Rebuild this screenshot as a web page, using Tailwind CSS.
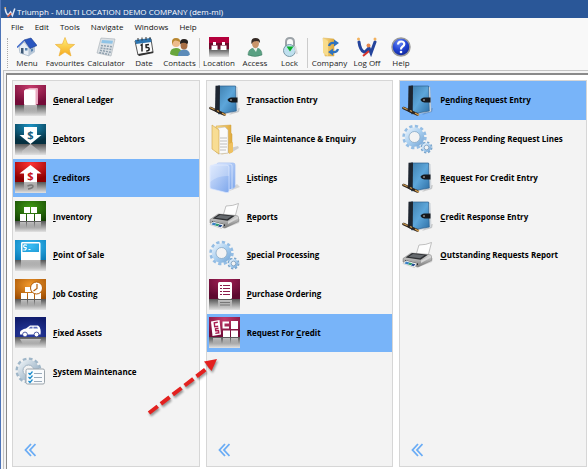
<!DOCTYPE html>
<html lang="en">
<head>
<meta charset="utf-8">
<meta name="viewport" content="width=device-width, initial-scale=1">
<title>Triumph - MULTI LOCATION DEMO COMPANY (dem-ml)</title>
<script src="https://cdn.jsdelivr.net/npm/@tailwindcss/browser@4"></script>
</head>
<body class="relative flex h-screen flex-col overflow-hidden border-l border-[#4d74b8] bg-[#f8f8f8] font-['Open_Sans','Noto_Sans',sans-serif] text-[#111]">

<!-- Icon library -->
<svg width="0" height="0" class="absolute" aria-hidden="true">
  <defs>
    <linearGradient id="floor" x2="0" y2="1"><stop stop-color="#555"/><stop offset="1" stop-color="#e2e2e2"/></linearGradient>
    <linearGradient id="fade" x2="0" y2="1"><stop stop-color="#fff" stop-opacity=".6"/><stop offset="1" stop-color="#fff" stop-opacity="0"/></linearGradient>
    <radialGradient id="g-pink" cx=".5" cy=".1" r=".8"><stop stop-color="#c43a6b"/><stop offset="1" stop-color="#740c38"/></radialGradient>
    <radialGradient id="g-teal" cx=".5" cy=".1" r=".8"><stop stop-color="#1c93c4"/><stop offset="1" stop-color="#053040"/></radialGradient>
    <radialGradient id="g-red" cx=".5" cy=".1" r=".8"><stop stop-color="#f33"/><stop offset="1" stop-color="#8e0000"/></radialGradient>
    <radialGradient id="g-green" cx=".5" cy=".3" r=".8"><stop stop-color="#3f9a14"/><stop offset="1" stop-color="#123f02"/></radialGradient>
    <radialGradient id="g-sky" cx=".5" cy=".3" r=".8"><stop stop-color="#38bdf5"/><stop offset="1" stop-color="#0a7cb8"/></radialGradient>
    <radialGradient id="g-orange" cx=".5" cy=".3" r=".8"><stop stop-color="#f39a2c"/><stop offset="1" stop-color="#9c4c02"/></radialGradient>
    <radialGradient id="g-navy" cx=".5" cy=".9" r=".9"><stop stop-color="#2b3fa5"/><stop offset="1" stop-color="#101c6c"/></radialGradient>
    <radialGradient id="g-plum" cx=".5" cy=".1" r=".8"><stop stop-color="#a21f55"/><stop offset="1" stop-color="#5e0a30"/></radialGradient>
    <linearGradient id="book" x2="1" y2="1"><stop stop-color="#3f7fae"/><stop offset=".5" stop-color="#5da6da"/><stop offset="1" stop-color="#2d6fa5"/></linearGradient>
    <linearGradient id="gear" x2="1" y2="1"><stop stop-color="#e3effa"/><stop offset=".5" stop-color="#a9cff0"/><stop offset="1" stop-color="#7cabd8"/></linearGradient>
    <linearGradient id="greygear" x2="1" y2="1"><stop stop-color="#e6edf2"/><stop offset="1" stop-color="#8fa9bf"/></linearGradient>
    <linearGradient id="folder" x2="1" y2="0"><stop stop-color="#f9dc8c"/><stop offset="1" stop-color="#dfa93c"/></linearGradient>
    <linearGradient id="sheet" x2="1" y2="1"><stop stop-color="#d5e3fd"/><stop offset="1" stop-color="#7fa8ec"/></linearGradient>
    <linearGradient id="metal" x2="0" y2="1"><stop stop-color="#e0e0e0"/><stop offset="1" stop-color="#7c7c7c"/></linearGradient>
    <radialGradient id="ball" cx=".4" cy=".25" r=".8"><stop stop-color="#6c8cf5"/><stop offset=".5" stop-color="#2346d6"/><stop offset="1" stop-color="#0b1f8f"/></radialGradient>
    <linearGradient id="star" x2="0" y2="1"><stop stop-color="#fff27a"/><stop offset="1" stop-color="#f6a81c"/></linearGradient>
  </defs>

  <symbol id="ledger" viewBox="0 0 31 31">
    <path fill="url(#g-pink)" d="M0 0h31v20H0z"/><path fill="url(#floor)" d="M0 20h31v11H0z"/>
    <path fill="#e9a9c0" d="M12 3h10q1 0 1 1v15l-3 1V6z"/><path fill="#f6d3df" d="M10 4h10q1 0 1 1v15h-3z"/>
    <rect x="9" y="5" width="11" height="15" rx="1" fill="#fff"/><path fill="url(#fade)" d="M9 20h11l2 0v8H9z"/>
  </symbol>
  <symbol id="inventory" viewBox="0 0 31 31">
    <path fill="url(#g-green)" d="M0 0h31v20H0z"/><path fill="url(#floor)" d="M0 20h31v11H0z"/>
    <path fill="#fff" d="M9 6h6v6H9zM16 6h6v6h-6zM5 13h6v7H5zM12 13h7v7h-7zM20 13h6v7h-6z"/>
    <path fill="url(#fade)" d="M5 21h6v6H5zM12 21h7v6h-7zM20 21h6v6h-6z"/>
  </symbol>
  <symbol id="pos" viewBox="0 0 31 31">
    <path fill="url(#g-sky)" d="M0 0h31v20H0z"/><path fill="url(#floor)" d="M0 20h31v11H0z"/>
    <path fill="#fff" fill-rule="evenodd" d="M7 2h17q1.500 0 1.500 1.500V20H6V3.500Q6 2 7 2zm.5 1.500V12H24V3.500z"/>
    <path fill="none" stroke="#fff" stroke-width="1.200" d="M12 5.200q-3.300-1-3.300.8t1.800 1.700-.2 2.300H8.200M13.500 9.500h2"/>
    <path fill="url(#fade)" d="M6 20h19.500v9H6z"/>
  </symbol>
  <symbol id="job" viewBox="0 0 31 31">
    <path fill="url(#g-orange)" d="M0 0h31v20H0z"/><path fill="url(#floor)" d="M0 20h31v11H0z"/>
    <path fill="#fff" d="M10 8h6v5h-6zM6 14h6v6H6zM13 14h6v6h-6zM20 14h6v6h-6z"/>
    <circle cx="21.500" cy="9" r="6" fill="#fff" stroke="#b35d08"/><path fill="none" stroke="#b35d08" stroke-width="1.200" d="M22 5v4.500L18.500 12"/>
    <path fill="url(#fade)" d="M6 21h6v6H6zM13 21h6v6h-6zM20 21h6v6h-6z"/>
  </symbol>
  <symbol id="assets" viewBox="0 0 31 31">
    <path fill="url(#g-navy)" d="M0 0h31v20H0z"/><path fill="url(#floor)" d="M0 20h31v11H0z"/>
    <path fill="#fff" d="M5 17.500V15q1-2.500 6-3.500l4-3h8q2 1 2.500 4 .5 3 0 5z"/><path fill="#5d6cbd" d="M13.500 11.500l2-1.800h2v1.800zM18.500 9.700h3.500l1 1.800h-4.500z"/>
    <circle cx="10" cy="17.500" r="2.400" fill="#fff" stroke="#26368f" stroke-width=".8"/><circle cx="21.500" cy="17.500" r="2.400" fill="#fff" stroke="#26368f" stroke-width=".8"/>
    <path fill="url(#fade)" d="M5 22h21l-2 5H8z"/>
  </symbol>
  <symbol id="maintenance" viewBox="0 0 31 31">
    <circle cx="13.500" cy="14.500" r="11.500" fill="none" stroke="#9fb6c8" stroke-width="3" stroke-dasharray="3.600 2.422"/>
    <circle cx="13.500" cy="14.500" r="8" fill="none" stroke="url(#greygear)" stroke-width="5.500"/>
    <circle cx="13.500" cy="14.500" r="5.500" fill="#f3f3f3" stroke="#9fb2c2"/>
    <rect x="11" y="13" width="18.500" height="15" rx="1.500" fill="#f9fbfd" stroke="#9aa3aa"/>
    <path fill="none" stroke="#1c8ccc" stroke-width="1.200" d="M13.500 17l1.500 1.500 2.500-3M13.500 21l1.500 1.500 2.500-3M13.500 25l1.500 1.500 2.500-3"/>
    <path stroke="#9ab" d="M19 17.500h8M19 21.500h8M19 25.500h8"/>
  </symbol>
  <symbol id="journal" viewBox="0 0 31 31">
    <path fill="#000" opacity=".15" d="M20 30l10-3 1-4-5 1z"/>
    <path fill="#e4e8ec" stroke="#9aa7b2" stroke-width=".4" d="M11 1.500l17 .5 1 24.500-17 3z"/>
    <path fill="url(#book)" stroke="#2b5f8c" stroke-width=".7" d="M9 1h17.500l.8 25L9.500 29z"/>
    <path fill="#1d2530" d="M6.500.8L11 .6l-.3 28.400-4.700-2.500z"/>
    <path fill="#15181d" d="M28.500 12.500h-6q-3.500.5-4 2.500 1 2 4 2.500h6z"/><circle cx="22" cy="15" r="1" fill="#888"/>
    <path stroke="#2e2620" stroke-width="2.600" stroke-linecap="round" d="M1.500 23l14 6.500"/><path stroke="#cf9c4e" stroke-width="1.300" d="M1 22.500l4.500 2M8 25.500l2 1M13 28.200l4 1.900"/>
  </symbol>
  <symbol id="files" viewBox="0 0 31 31">
    <path fill="#000" opacity=".15" d="M20 30l10-6-1-2-8 2z"/>
    <path fill="url(#folder)" stroke="#cfa040" stroke-width=".5" d="M7 2l15-1v8l1 1v18l-10 2-6-2z"/>
    <path fill="#fafafa" stroke="#bbb" stroke-width=".5" d="M9 4l7-1 3 3v23l-10 1z"/>
    <path stroke="#a5a5a5" stroke-width=".7" d="M11 14h7M11 17h7M11 20h7M11 23h7M11 26h6"/>
    <path fill="#f8dd93" stroke="#cfa24a" stroke-width=".6" d="M3 1l7 5v24l-7-5z"/>
    <path fill="#efc160" d="M20 20l4-2v10l-4 2z"/>
  </symbol>
  <symbol id="listings" viewBox="0 0 31 31">
    <path fill="#000" opacity=".12" d="M18 30l13-5-3-3z"/>
    <path fill="url(#sheet)" stroke="#9dbcf2" stroke-width=".7" d="M8 2q0-1 2-1h14q2 0 2 2v22l-3 2z"/>
    <path fill="url(#sheet)" stroke="#e3edff" stroke-width=".7" d="M5 3q0-1 2-1h14q2 0 2 2v23l-3 1z"/>
    <path fill="url(#sheet)" stroke="#dbe7ff" stroke-width=".7" d="M1 5q0-2 3-2h13q3 0 3 2v24q0 2-3 1.500L3 27q-2 0-2-2z"/>
    <path fill="#fff" opacity=".25" d="M1 5q0-2 3-2h13q3 0 3 2v9Q9 13 1 20z"/>
  </symbol>
  <symbol id="printer" viewBox="0 0 31 31">
    <path fill="#000" opacity=".14" d="M14 28l16-6 1-4-14 6z"/>
    <path fill="#fdfdfd" stroke="#a8a8a8" stroke-width=".7" d="M17 5q7 0 12.500-2.500L26 16l-12-1z"/>
    <path fill="url(#metal)" stroke="#777" stroke-width=".5" d="M1 18.500l8-5.500 18 1.500q2.500 0 2.500 2v4L16 27 1 22z"/>
    <path fill="#2e3033" d="M3.500 17.500L10 13l16 1.800-7.500 5z"/><path fill="#666a6e" d="M6.500 16.800L11 14l11.500 1.200-4.500 3z"/>
    <path fill="#d5d5d5" d="M19 20.500l10-5v2l-10 5.500z"/>
    <path fill="#1d1f22" d="M3 20l13 3.500v1.500L3 21.500z"/>
    <path fill="#fff" stroke="#999" stroke-width=".4" d="M4 20.500l11 3-2.500 4L1 23.500z"/>
    <path fill="#3b82c4" d="M4 21.500l3.500 1-1.500 2-3.500-1z"/><path fill="#2f9b74" d="M7.500 22.500l3 .8-1.500 2-3-.8z"/><path fill="#254f92" d="M10.500 23.500l3 .8-1.800 2-2.700-.8z"/>
  </symbol>
  <symbol id="gears" viewBox="0 0 31 31">
    <circle cx="12.500" cy="13" r="10.700" fill="none" stroke="#94bde4" stroke-width="3" stroke-dasharray="3.200 2.403"/>
    <circle cx="12.500" cy="13" r="7.700" fill="none" stroke="url(#gear)" stroke-width="4.200"/>
    <circle cx="12.500" cy="13" r="5.500" fill="none" stroke="#7da0c0" stroke-width=".7"/>
    <circle cx="24.500" cy="23.500" r="5" fill="none" stroke="#7ba6cc" stroke-width="2" stroke-dasharray="2.200 1.727"/>
    <circle cx="24.500" cy="23.500" r="3.500" fill="none" stroke="url(#gear)" stroke-width="2.200"/>
    <circle cx="24.500" cy="23.500" r="2.300" fill="none" stroke="#5f87ab" stroke-width=".6"/>
  </symbol>
  <symbol id="purchase" viewBox="0 0 31 31">
    <path fill="url(#g-plum)" d="M0 0h31v20H0z"/><path fill="url(#floor)" d="M0 20h31v11H0z"/>
    <rect x="9" y="3" width="14" height="17" rx="1.500" fill="#fff"/>
    <path stroke="#8c1c4c" stroke-width="1.200" d="M11 6.500h2M14 6.500h7M11 9.500h2M14 9.500h7M11 12.500h2M14 12.500h7M11 15.500h2M14 15.500h7"/>
    <path fill="url(#fade)" d="M9 21h14v8H9z"/><path stroke="#777" d="M11 23.500h10M11 26h10"/>
  </symbol>
  <symbol id="request" viewBox="0 0 31 31">
    <path fill="url(#g-pink)" d="M0 0h31v20H0z"/><path fill="url(#floor)" d="M0 20h31v11H0z"/>
    <path fill="#fff" d="M2 4.500L10.500 3 12 17.500 3.500 19z"/><path fill="none" stroke="#a91d51" stroke-width="1.400" d="M8.800 5.300l-3.500.5.400 4 3.500-.5M9.500 11.300l-3 .5.200 2 2.800-.3.300 2.300-3.500.6"/>
    <path fill="none" stroke="#fff" stroke-width="2" d="M20 5.500h-5.500v5H20"/>
    <path fill="#fff" d="M22 4h7v8h-7zM14 13.500h7V20h-7zM22 13.500h7V20h-7z"/><path fill="url(#fade)" d="M4 21h8v6H4zM14 21h7v6h-7zM22 21h7v6h-7z"/>
  </symbol>

  <symbol id="home" viewBox="0 0 20 20">
    <path fill="#e9eff6" stroke="#8fa3b8" stroke-width=".6" d="M2 10l5-5 5 6v8l-9-3z"/><path fill="#b9c8d8" d="M12 11l6-2v6l-6 4z"/>
    <path fill="#2a56bf" stroke="#183a8c" stroke-width=".6" d="M7 3l7-2 6 7.500-7 3z"/><path fill="none" stroke="#3c67c8" stroke-width="1.500" d="M0 10.500L7 3.500"/>
    <path fill="#3d5876" d="M4 11h2.500v6L4 16z"/><path fill="#5883ae" d="M8 11h2.500v2.500H8zM14 12l2-.6v2.500l-2 .8z"/>
  </symbol>
  <symbol id="favourite" viewBox="0 0 20 20"><path fill="url(#star)" stroke="#eeb13a" stroke-width=".7" d="M10 .5l2.600 6.700 7 .3-5.500 4.500 1.900 7L10 15l-6 4 1.900-7L.4 7.500l7-.3z"/></symbol>
  <symbol id="calculator" viewBox="0 0 20 20">
    <path fill="#dce1e5" stroke="#a5adb4" stroke-width=".6" d="M5 1l14 1-4 17-14-3z"/><path fill="#8fc3e6" d="M6 3l11 .8-.7 3L5.300 6z"/>
    <path stroke="#8fa0ae" stroke-width="1.500" stroke-dasharray="2 1" d="M5 8.500l11 1.200M4.500 11l11 1.500M4 13.300l11 2M3.200 15.500l10 2"/>
  </symbol>
  <symbol id="date" viewBox="0 0 20 20">
    <path fill="#fafafa" stroke="#555" d="M1 4l16-2 2 13L4 18z"/><path fill="#2d75b0" d="M1 3l16-2 .5 4L2 7z"/><path stroke="#333" d="M4 1v3M8 .5v3M12 0v3M16 0v2.500"/>
    <path fill="none" stroke="#222" stroke-width="1.500" d="M6.500 8.500l1.500-1v7M15 7.500l-3 .5.200 2.500q3-.5 3 1.500t-3 2"/><path fill="#333" d="M4 17l15-2.500.5 1.500L5 19z"/>
  </symbol>
  <symbol id="contacts" viewBox="0 0 20 20">
    <path fill="#69a63c" d="M0 17q0-6 6-6 5 0 6 5l-3 3q-6 0-9-2z"/><circle cx="6" cy="6" r="4" fill="#edbb8c"/><path fill="#b8862f" d="M2 6q-.5-5 4-5t4 4q-3-2-5-1.500T2 8z"/>
    <path fill="#5c8bb9" d="M8 19q0-6 6-6.500 5 0 6 5l-2 1.500z"/><ellipse cx="14" cy="8" rx="3.500" ry="4.500" fill="#a86f45"/><path fill="#28221f" d="M10 7q-.5-5 4-5t4 4l-1 1q-2-2-5-1z"/>
  </symbol>
  <symbol id="location" viewBox="0 0 20 20">
    <path fill="#b4003c" d="M0 0h20v11H0z"/><path fill="#6b0b2a" d="M0 6h20v6H0z"/><path fill="url(#floor)" d="M0 12h20v8H0z"/>
    <path fill="#fff" d="M4 5h3v3H4zM13 5h3v3h-3zM2.500 8.500h6v4.500h-6zM11.500 8.500h6v4.500h-6z"/>
  </symbol>
  <symbol id="access" viewBox="0 0 20 20">
    <path fill="#5aa183" stroke="#38765c" stroke-width=".5" d="M3 18q0-6 6-7l3 0q5 1 5 7-7 3-14 0z"/><path fill="#eaf3ee" d="M8 11l3 4 1.500-4z"/>
    <ellipse cx="10.500" cy="6.500" rx="3.500" ry="4.700" fill="#c9956b"/><path fill="#352a25" d="M6.500 7q-1-6 4-6t4.500 5q-1-2-3-2t-4 1z"/>
  </symbol>
  <symbol id="lock" viewBox="0 0 20 20">
    <path fill="none" stroke="#9ca3a8" stroke-width="2" d="M6 10V5q0-4 4-4t4 4v5"/><circle cx="9.500" cy="13.500" r="6" fill="#bfe0ef" stroke="#7b97a6"/><path fill="#0caf2c" d="M6.500 9.500h7l-3.500 5z"/><path stroke="#ddd" stroke-width="2" d="M15 9l2 8"/>
  </symbol>
  <symbol id="company" viewBox="0 0 20 20">
    <path fill="url(#folder)" stroke="#d6aa4b" stroke-width=".5" d="M3 1l11 1v17H5z"/><path fill="#f8dc8d" d="M3 1l5 3v15l-5-3z"/>
    <path fill="none" stroke="#2f72bf" stroke-width="2.200" d="M9 9q1-4 6-3M18 12q-1 4-6 3"/><path fill="#2f72bf" d="M14 2.500l5 3.500-5 3.500zM13 11.500L8 15l5 3.500z"/>
  </symbol>
  <symbol id="logoff" viewBox="0 0 20 20">
    <path fill="none" stroke="#24449c" stroke-width="3" stroke-linecap="round" d="M2 5q1 8 5 10M8 15l4-4 2 5 4-11"/><path stroke="#d9342b" stroke-width="2" d="M6 19l6-5"/>
    <circle cx="11.500" cy="8.500" r="2" fill="#e9884c"/><circle cx="1.500" cy="2" r="1.500" fill="#f2b25f"/><circle cx="18" cy="2" r="1.500" fill="#f2b25f"/>
  </symbol>
  <symbol id="help" viewBox="0 0 20 20"><circle cx="10" cy="10" r="9" fill="url(#ball)" stroke="#9a9a9a" stroke-width="1.500"/><path fill="none" stroke="#fff" stroke-width="2.200" d="M7 7.500q.3-3 3.200-3T13.300 7q0 1.500-1.700 2.500T10 12.500"/><circle cx="10" cy="15" r="1.300" fill="#fff"/></symbol>
  <symbol id="back" viewBox="0 0 12 14"><path fill="none" stroke="#6aacf5" stroke-width="1.800" d="M7 1L1.500 7 7 13M11.500 1L6 7l5.500 6"/></symbol>
</svg>

<header class="flex h-[18px] shrink-0 items-center gap-px bg-[#2a5798] pl-[3px] pt-[5px] text-white">
  <svg class="h-3 w-3" viewBox="0 0 20 20" aria-hidden="true"><path fill="none" stroke="#dfe6f5" stroke-width="2.500" d="M2 4q1 9 5 11l4-5 3 6 4-12"/><path stroke="#e25a3c" stroke-width="2.500" d="M6 18l6-6"/><circle cx="2" cy="3" r="1.500" fill="#f3b05c"/></svg>
  <h1 class="text-[8px] leading-3 whitespace-nowrap">Triumph - MULTI LOCATION DEMO COMPANY (dem-ml)</h1>
</header>

<nav class="flex h-[17px] shrink-0 items-center gap-[11px] pl-[10px] text-[8px] leading-3" aria-label="Main menu">
  <button>File</button><button>Edit</button><button>Tools</button><button>Navigate</button><button>Windows</button><button>Help</button>
</nav>

<div class="flex h-[35px] shrink-0 items-center pl-[6px] text-[8px] leading-[11px] text-[#222]" role="toolbar" aria-label="Shortcuts">
  <span class="h-[30px] border-l border-dotted border-[#aaa]"></span>
  <button class="flex w-[38px] flex-col items-center"><svg class="size-5"><use href="#home"/></svg>Menu</button>
  <button class="flex w-[38px] flex-col items-center"><svg class="size-5"><use href="#favourite"/></svg>Favourites</button>
  <button class="flex w-[44px] flex-col items-center"><svg class="size-5"><use href="#calculator"/></svg>Calculator</button>
  <button class="flex w-[32px] flex-col items-center"><svg class="size-5"><use href="#date"/></svg>Date</button>
  <button class="flex w-[39px] flex-col items-center"><svg class="size-5"><use href="#contacts"/></svg>Contacts</button>
  <span class="h-[30px] border-l border-[#ccc]"></span>
  <button class="flex w-[38px] flex-col items-center"><svg class="size-5"><use href="#location"/></svg>Location</button>
  <button class="flex w-[34px] flex-col items-center"><svg class="size-5"><use href="#access"/></svg>Access</button>
  <button class="flex w-[35px] flex-col items-center"><svg class="size-5"><use href="#lock"/></svg>Lock</button>
  <span class="h-[30px] border-l border-[#ccc]"></span>
  <button class="flex w-[43px] flex-col items-center"><svg class="size-5"><use href="#company"/></svg>Company</button>
  <button class="flex w-[32px] flex-col items-center"><svg class="size-5"><use href="#logoff"/></svg>Log Off</button>
  <button class="flex w-[36px] flex-col items-center"><svg class="size-5"><use href="#help"/></svg>Help</button>
</div>

<div class="ml-[2px] flex min-h-0 grow border-t border-l border-[#c4c4c4] bg-[#f4f4f4] pt-[2px] pl-[2px]">
  <main class="grid grow grid-cols-3 gap-[6px] border-t-2 border-l border-[#8a8a8a] bg-white pt-[5px] pr-px pb-[2px] pl-[5px] text-[8px] leading-3 font-bold text-black">
    <section class="flex flex-col border border-[#d6d6d6] bg-[#f3f3f3]" aria-label="Modules">
      <div class="grid h-[310px] grid-rows-8">
        <button class="flex items-center gap-[7px] pl-[2px]"><svg class="size-[31px]"><use href="#ledger"/></svg><span><u>G</u>eneral Ledger</span></button>
        <button class="flex items-center gap-[7px] pl-[2px]">
          <svg class="size-[31px]" viewBox="0 0 31 31" aria-hidden="true">
            <path fill="url(#g-teal)" d="M0 0h31v20H0z"/><path fill="url(#floor)" d="M0 20h31v11H0z"/>
            <path fill="#fff" d="M9 3h13v8h4.500L15.500 20 4.500 11H9z"/>
            <text x="15.500" y="15" text-anchor="middle" font-size="11" font-weight="700" fill="#14607f">$</text>
            <path fill="url(#fade)" d="M15.500 20l9 7v4H7v-4z"/>
          </svg><span><u>D</u>ebtors</span></button>
        <button class="flex items-center gap-[7px] bg-[#78b4f9] pl-[2px]">
          <svg class="size-[31px]" viewBox="0 0 31 31" aria-hidden="true">
            <path fill="url(#g-red)" d="M0 0h31v20H0z"/><path fill="url(#floor)" d="M0 20h31v11H0z"/>
            <path fill="#fff" d="M15.500 3l11 8.500H22V20H9v-8.500H4.500z"/>
            <text x="15.500" y="18" text-anchor="middle" font-size="11" font-weight="700" fill="#c8141c">$</text>
            <path fill="url(#fade)" d="M9 20h13v8H9z"/><path fill="none" stroke="#777" stroke-width="1.500" d="M12.500 24q5-2 5.500 0t-5 3"/>
          </svg><span><u>C</u>reditors</span></button>
        <button class="flex items-center gap-[7px] pl-[2px]"><svg class="size-[31px]"><use href="#inventory"/></svg><span><u>I</u>nventory</span></button>
        <button class="flex items-center gap-[7px] pl-[2px]"><svg class="size-[31px]"><use href="#pos"/></svg><span><u>P</u>oint Of Sale</span></button>
        <button class="flex items-center gap-[7px] pl-[2px]"><svg class="size-[31px]"><use href="#job"/></svg><span><u>J</u>ob Costing</span></button>
        <button class="flex items-center gap-[7px] pl-[2px]"><svg class="size-[31px]"><use href="#assets"/></svg><span><u>F</u>ixed Assets</span></button>
        <button class="flex items-center gap-[7px] pl-[2px]"><svg class="size-[31px]"><use href="#maintenance"/></svg><span><u>S</u>ystem Maintenance</span></button>
      </div>
      <button class="mt-auto mb-[9px] ml-[11px] self-start" aria-label="Back"><svg class="h-[14px] w-3"><use href="#back"/></svg></button>
    </section>
    <section class="flex flex-col border border-[#d6d6d6] bg-[#f3f3f3]" aria-label="Creditors">
      <div class="grid h-[310px] grid-rows-8">
        <button class="flex items-center gap-[7px] pl-[2px]"><svg class="size-[31px]"><use href="#journal"/></svg><span><u>T</u>ransaction Entry</span></button>
        <button class="flex items-center gap-[7px] pl-[2px]"><svg class="size-[31px]"><use href="#files"/></svg><span><u>F</u>ile Maintenance &amp; Enquiry</span></button>
        <button class="flex items-center gap-[7px] pl-[2px]"><svg class="size-[31px]"><use href="#listings"/></svg><span><u>L</u>istings</span></button>
        <button class="flex items-center gap-[7px] pl-[2px]"><svg class="size-[31px]"><use href="#printer"/></svg><span><u>R</u>eports</span></button>
        <button class="flex items-center gap-[7px] pl-[2px]"><svg class="size-[31px]"><use href="#gears"/></svg><span><u>S</u>pecial Processing</span></button>
        <button class="flex items-center gap-[7px] pl-[2px]"><svg class="size-[31px]"><use href="#purchase"/></svg><span><u>P</u>urchase Ordering</span></button>
        <button class="flex items-center gap-[7px] bg-[#78b4f9] pl-[2px]"><svg class="size-[31px]"><use href="#request"/></svg><span>Request For <u>C</u>redit</span></button>
      </div>
      <button class="mt-auto mb-[9px] ml-[11px] self-start" aria-label="Back"><svg class="h-[14px] w-3"><use href="#back"/></svg></button>
    </section>
    <section class="flex flex-col border border-[#d6d6d6] bg-[#f3f3f3]" aria-label="Request For Credit">
      <div class="grid h-[310px] grid-rows-8">
        <button class="flex items-center gap-[7px] bg-[#78b4f9] pl-[2px]"><svg class="size-[31px]"><use href="#journal"/></svg><span>P<u>e</u>nding Request Entry</span></button>
        <button class="flex items-center gap-[7px] pl-[2px]"><svg class="size-[31px]"><use href="#gears"/></svg><span><u>P</u>rocess Pending Request Lines</span></button>
        <button class="flex items-center gap-[7px] pl-[2px]"><svg class="size-[31px]"><use href="#journal"/></svg><span><u>R</u>equest For Credit Entry</span></button>
        <button class="flex items-center gap-[7px] pl-[2px]"><svg class="size-[31px]"><use href="#journal"/></svg><span><u>C</u>redit Response Entry</span></button>
        <button class="flex items-center gap-[7px] pl-[2px]"><svg class="size-[31px]"><use href="#printer"/></svg><span><u>O</u>utstanding Requests Report</span></button>
      </div>
      <button class="mt-auto mb-[9px] ml-[11px] self-start" aria-label="Back"><svg class="h-[14px] w-3"><use href="#back"/></svg></button>
    </section>
  </main>
</div>

<!-- Callout arrow over the panels -->
<svg class="pointer-events-none absolute top-[354px] left-[143px] h-[66px] w-[80px] drop-shadow-[1px_2px_1px_#0006]" viewBox="0 0 80 66" aria-hidden="true">
  <path stroke="#e3211f" stroke-width="4" stroke-dasharray="11 4" d="M5 59L66 12"/><path fill="#e3211f" d="M73 5l-5.500 12-7.500-9.500z"/>
</svg>
</body>
</html>
